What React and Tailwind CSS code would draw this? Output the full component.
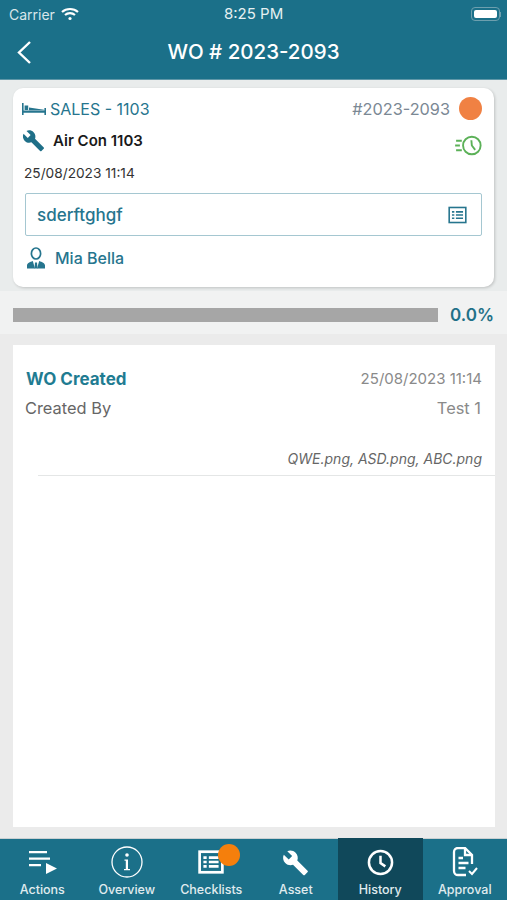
import React from 'react';

const font = { fontFamily: 'Inter, "Liberation Sans", sans-serif' };

const WrenchIcon = ({ className }) => (
    <svg className={className} viewBox="0 0 24 24" fill="currentColor">
        <path d="M22.7 19.3 13.6 10.2c.9-2.3.4-5-1.5-6.9C10.1 1.3 7.1.9 4.7 2L9 6.3 6 9.3 1.6 5C.4 7.4.9 10.4 2.9 12.4c1.9 1.9 4.6 2.4 6.9 1.5l9.1 9.1c.4.4 1 .4 1.4 0l2.3-2.3c.5-.4.5-1.1.1-1.4z" />
    </svg>
);

const ListBoxIcon = ({ className, strokeWidth = 2 }) => (
    <svg className={className} viewBox="0 0 24 22" fill="none" stroke="currentColor" strokeWidth={strokeWidth}>
        <rect x="1.5" y="1.5" width="21" height="19" />
        <path d="M5 7h3M10 7h9M5 11h3M10 11h9M5 15h3M10 15h9" />
    </svg>
);

const BedIcon = ({ className }) => (
    <svg className={className} viewBox="0 0 24 12" fill="currentColor">
        <path d="M0 0h1.6v12H0zM22.4 5h1.6v7h-1.6zM1.6 7.5h20.8v2.2H1.6z" />
        <path d="M2.6 2.5h3.6v4.5H2.6zM7 4.5l15 2.3V7.2H7z" />
    </svg>
);

const PersonIcon = ({ className }) => (
    <svg className={className} viewBox="0 0 20 22" fill="none" stroke="currentColor">
        <ellipse cx="10" cy="6.5" rx="4.6" ry="5.5" strokeWidth="1.7" />
        <path d="M1 21.5v-3c0-2.5 3-3.5 5.8-4.5L9 21.5zM19 21.5v-3c0-2.5-3-3.5-5.8-4.5L11 21.5z" fill="currentColor" stroke="none" />
        <path d="M9 15.5h2l.5 6h-3z" fill="currentColor" stroke="none" />
    </svg>
);

const FastClockIcon = ({ className }) => (
    <svg className={className} viewBox="0 0 28 22" fill="none" stroke="currentColor" strokeWidth="2">
        <circle cx="17.5" cy="11" r="9.2" />
        <path d="M17 5.5 17.5 11l3.5 4.5M1 6h6M0 11h5M1 16h6" />
    </svg>
);

const ActionsIcon = ({ className }) => (
    <svg className={className} viewBox="0 0 29 25" fill="currentColor">
        <path d="M1 1h18v2.2H1zM1 7.5h21v2.2H1zM1 14h12v2.2H1zM18 13l11 5.5L18 24z" />
    </svg>
);

const InfoIcon = ({ className }) => (
    <svg className={className} viewBox="0 0 32 32" fill="none" stroke="currentColor">
        <circle cx="16" cy="16" r="15" strokeWidth="1.3" />
        <circle cx="16" cy="9" r="1.8" fill="currentColor" stroke="none" />
        <path d="M13.5 13.5H17v9.5h2v1.2h-6V23h1.8v-8.3h-1.3z" fill="currentColor" stroke="none" />
    </svg>
);

const ClockIcon = ({ className }) => (
    <svg className={className} viewBox="0 0 28 28" fill="none" stroke="currentColor" strokeWidth="2.6">
        <circle cx="14" cy="14" r="12" />
        <path d="M14 7v7.5l5 3.5" />
    </svg>
);

const ApprovalIcon = ({ className }) => (
    <svg className={className} viewBox="0 0 26 30" fill="none" stroke="currentColor" strokeWidth="2.3">
        <path d="M14 28H6a4 4 0 0 1-4-4V5a4 4 0 0 1 4-4h7l7 7v9" />
        <path d="M13 1v7h7M6.5 11H11M6.5 16h10M6.5 21h7" />
        <path d="m17 24 3 3 5-6" strokeWidth="2" />
    </svg>
);

const tabs = [
    { label: 'Actions', icon: <ActionsIcon className="w-[29px] h-[25px]" /> },
    { label: 'Overview', icon: <InfoIcon className="w-8 h-8" /> },
    { label: 'Checklists', icon: <ListBoxIcon className="w-[26px] h-6" strokeWidth={2.5} />, badge: true },
    { label: 'Asset', icon: <WrenchIcon className="w-[27px] h-[27px]" /> },
    { label: 'History', icon: <ClockIcon className="w-[27px] h-[27px]" />, active: true },
    { label: 'Approval', icon: <ApprovalIcon className="w-[26px] h-[30px]" /> },
];

const StatusBar = () => (
    <div className="h-7 relative flex items-center justify-between pl-[9px] pr-[6px] text-[#d9e6ea] text-[14px]">
        <div className="flex items-center gap-[6px]">
            <span>Carrier</span>
            <svg className="w-[18px] h-[14px] text-white" viewBox="0 0 18 14" fill="none" stroke="currentColor" strokeWidth="2.2">
                <path d="M1 5c4.5-4 11.5-4 16 0M4 8c2.8-2.4 7.2-2.4 10 0" />
                <circle cx="9" cy="11.5" r="1.6" fill="currentColor" stroke="none" />
            </svg>
        </div>
        <span className="absolute left-[224px] top-[6px] leading-4 text-[15px] text-[#e6f0f2]">8:25 PM</span>
        <div className="flex items-center">
            <div className="w-[29px] h-[14px] rounded-[4px] border border-[#6d9fae] p-[2px]">
                <div className="w-full h-full rounded-[2px] bg-white"></div>
            </div>
            <div className="w-[1px] h-[5px] bg-[#6d9fae]"></div>
        </div>
    </div>
);

export default function App() {
    return (
        <div style={font} className="w-[507px] h-[900px] flex flex-col overflow-hidden bg-[#ebecec]">
            <header className="h-[80px] shrink-0 bg-[#1b7089] border-b border-[#5f97a8] text-white">
                <StatusBar />
                <div className="h-[51px] relative flex items-center justify-center pb-[3px]">
                    <svg className="absolute left-[16px] top-[12px] w-[16px] h-[25px]" viewBox="0 0 16 25" fill="none" stroke="currentColor" strokeWidth="2.4">
                        <path d="M14 2 3 12.5 14 23" />
                    </svg>
                    <h1 className="text-[20.5px] font-medium leading-6">WO # 2023-2093</h1>
                </div>
            </header>

            <div className="h-[211px] shrink-0 px-[13px] pt-2 bg-[#e9ecec]">
                <div className="h-[199px] rounded-[10px] bg-white shadow-[1px_1px_3px_rgba(0,0,0,0.18)] px-3 pt-[9px]">
                    <div className="h-[23px] flex items-center justify-between text-[#26758e]">
                        <div className="flex items-center gap-[4px] -ml-[3px]">
                            <BedIcon className="w-6 h-3" />
                            <span className="text-[16px] leading-5">SALES - 1103</span>
                        </div>
                        <div className="flex items-center gap-[9px]">
                            <span className="text-[16.3px] leading-5 text-[#7b8894]">#2023-2093</span>
                            <span className="w-[23px] h-[23px] rounded-full bg-[#f08143]"></span>
                        </div>
                    </div>
                    <div className="h-[30px] mt-[10px] flex items-start justify-between">
                        <div className="h-[21px] flex items-center gap-[8px] -ml-[3px] text-[#1f6f88]">
                            <WrenchIcon className="w-[23px] h-[23px]" />
                            <span className="text-[15px] font-semibold leading-5 text-[#1a1a1a]">Air Con 1103</span>
                        </div>
                        <FastClockIcon className="w-[27px] h-[21px] mt-[5px] text-[#5cb158]" />
                    </div>
                    <div className="text-[13.7px] leading-4 text-[#333] -ml-[1px] mt-[5px]">25/08/2023 11:14</div>
                    <div className="h-[43px] mt-[12px] flex items-center justify-between rounded-[2px] border border-[#a5c7d1] pl-[11px] pr-[14px]">
                        <span className="text-[17px] font-medium leading-5 text-[#26758e]">sderftghgf</span>
                        <ListBoxIcon className="w-[19px] h-[18px] text-[#26758e]" />
                    </div>
                    <div className="mt-[11px] flex items-center gap-[9px] text-[#26758e]">
                        <PersonIcon className="w-[20px] h-[22px] ml-[1px]" />
                        <span className="text-[16px] font-medium leading-5">Mia Bella</span>
                    </div>
                </div>
            </div>

            <div className="h-[43px] shrink-0 flex items-center gap-3 pl-[13px] pr-[13px] pt-[4px] bg-[#f1f2f2]">
                <div className="w-[425px] h-[14px] bg-[#a6a6a6]"></div>
                <span className="text-[17px] font-semibold leading-5 text-[#1f7188]">0.0%</span>
            </div>

            <main className="flex-1 min-h-0 pt-[11px] pl-[13px] pr-3 pb-[11px] bg-[#ebebeb]">
                <div className="h-full bg-white pt-[24px]">
                    <div className="flex items-center justify-between pl-[13px] pr-[13px]">
                        <span className="text-[17px] font-bold leading-5 text-[#1f7c92]">WO Created</span>
                        <span className="text-[15px] leading-5 text-[#8a8a8a]">25/08/2023 11:14</span>
                    </div>
                    <div className="mt-[9px] flex items-center justify-between pl-[12px] pr-[14px] text-[16.4px] leading-5">
                        <span className="text-[#666]">Created By</span>
                        <span className="text-[#8a8a8a]">Test 1</span>
                    </div>
                    <div className="mt-[31px] pr-[13px] text-right italic text-[14px] leading-5 text-[#666]">QWE.png, ASD.png, ABC.png</div>
                    <div className="ml-[25px] mt-[6px] border-b border-[#e4e6e6]"></div>
                </div>
            </main>

            <nav className="h-[62px] shrink-0 flex bg-[#1b7089] border-t border-[#c9d0d2] text-white">
                {tabs.map((tab) => (
                    <div key={tab.label} className={`relative flex-1 flex flex-col items-center ${tab.active ? 'bg-[#10485a] -mt-[1px]' : ''}`}>
                        <div className={`h-[38px] flex items-center justify-center relative ${tab.active ? 'mt-[5px]' : 'mt-[4px]'}`}>
                            {tab.icon}
                            {tab.badge && (
                                <span className="absolute -right-[16px] top-[1px] w-[22px] h-[22px] rounded-full bg-[#f57f0c]"></span>
                            )}
                        </div>
                        <span className="mt-[1px] text-[12.5px] font-medium leading-4 text-[#e0ecef]">{tab.label}</span>
                    </div>
                ))}
            </nav>
        </div>
    );
}
